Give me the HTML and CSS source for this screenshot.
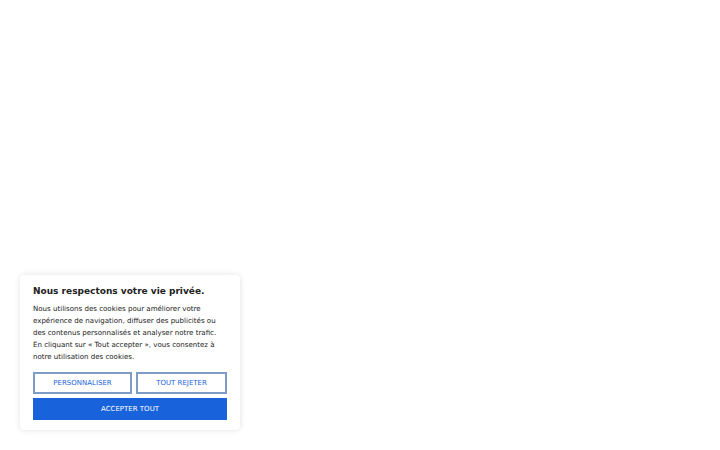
FILE: index.html
```html
<!DOCTYPE html>
<html lang="fr">
<head>
<meta charset="utf-8">
<link rel="stylesheet" href="styles.css">
</head>
<body>
<div class="page">
  <div class="banner">
    <p class="title">Nous respectons votre vie privée.</p>
    <p class="desc">Nous utilisons des cookies pour améliorer votre expérience de navigation, diffuser des publicités ou des contenus personnalisés et analyser notre trafic. En cliquant sur « Tout accepter », vous consentez à notre utilisation des cookies.</p>
    <div class="actions">
      <div class="row">
        <button class="btn outline">PERSONNALISER</button>
        <button class="btn outline">TOUT REJETER</button>
      </div>
      <button class="btn primary">ACCEPTER TOUT</button>
    </div>
  </div>
</div>
</body>
</html>
```

FILE: styles.css
```css
html, body { margin: 0; padding: 0; background: #fff; }
body { font-family: "DejaVu Sans", sans-serif; width: 720px; height: 450px; overflow: hidden; }
.page { display: flex; flex-direction: column; justify-content: flex-end; height: 450px; padding: 0 0 20px 20px; box-sizing: border-box; }
.banner {
  width: 220px; box-sizing: border-box;
  padding: 10px 13px 10px 13px;
  background: #fff;
  border-radius: 4px;
  box-shadow: 0 0 6px rgba(0,0,0,0.12);
}
.title { margin: 0 0 6px; font-size: 9px; font-weight: bold; color: #212121; line-height: 12px; white-space: nowrap; }
.desc { margin: 0 0 9px; font-size: 7.05px; line-height: 12px; color: #212121; }
.actions { display: flex; flex-direction: column; gap: 4px; }
.row { display: flex; gap: 4px; }
.btn { font-family: "DejaVu Sans", sans-serif; font-size: 7px; height: 22px; padding: 0; border-radius: 0; cursor: pointer; }
.row .btn:first-child { flex: 0 0 99px; }
.row .btn:last-child { flex: 1; }
.outline { background: #fff; color: #1863dc; border: 2px solid #7f9cc6; }
.primary { background: #1863dc; color: #fff; border: 2px solid #1863dc; width: 100%; }
```
